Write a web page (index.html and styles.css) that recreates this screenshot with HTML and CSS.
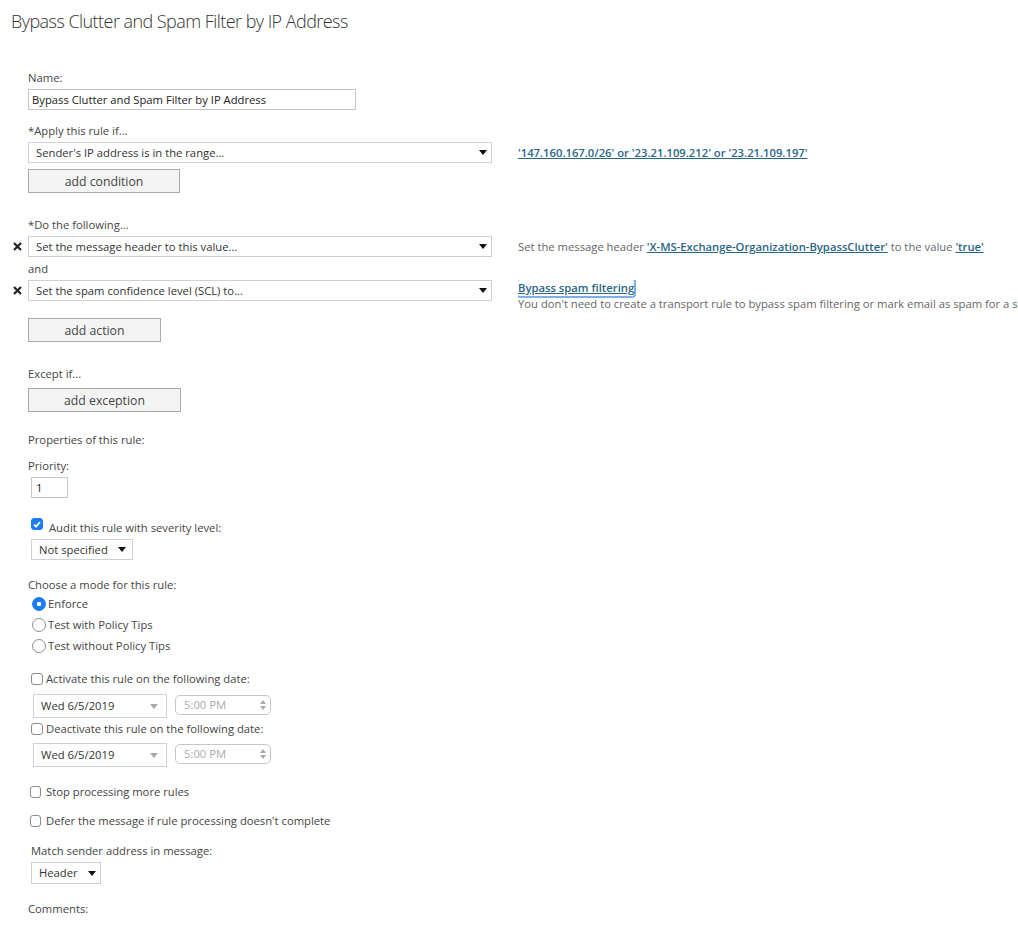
FILE: index.html
```html
<!DOCTYPE html>
<html lang="en">
<head>
    <meta charset="UTF-8">
    <meta name="viewport" content="width=device-width, initial-scale=1.0">
    <title>Bypass Clutter and Spam Filter by IP Address</title>
    <link rel="stylesheet" href="styles.css">
</head>
<body>
    <h1 class="page-title">Bypass Clutter and Spam Filter by IP Address</h1>

    <form class="rule-form">
        <label class="label">Name:</label>
        <input class="text-input name-input" type="text" value="Bypass Clutter and Spam Filter by IP Address">

        <label class="label gap-13">*Apply this rule if...</label>
        <div class="rule-row gap-3">
            <div class="gutter"></div>
            <div class="dropdown wide">
                <span>Sender's IP address is in the range...</span>
                <svg class="caret" width="8" height="5" viewBox="0 0 8 5"><path d="M0 0h8L4 5z"/></svg>
            </div>
            <div class="rule-desc">
                <a class="link" href="#">'147.160.167.0/26' or '23.21.109.212' or '23.21.109.197'</a>
            </div>
        </div>
        <button type="button" class="btn btn-condition gap-6">add condition</button>

        <label class="label gap-24">*Do the following...</label>
        <div class="rule-row gap-3">
            <div class="gutter">
                <svg class="remove" width="9" height="9" viewBox="0 0 9 9"><path d="M1 1l7 7M8 1L1 8"/></svg>
            </div>
            <div class="dropdown wide">
                <span>Set the message header to this value...</span>
                <svg class="caret" width="8" height="5" viewBox="0 0 8 5"><path d="M0 0h8L4 5z"/></svg>
            </div>
            <div class="rule-desc">
                Set the message header <a class="link" href="#">'X-MS-Exchange-Organization-BypassClutter'</a> to the value <a class="link" href="#">'true'</a>
            </div>
        </div>
        <div class="label gap-4">and</div>
        <div class="rule-row gap-3">
            <div class="gutter">
                <svg class="remove" width="9" height="9" viewBox="0 0 9 9"><path d="M1 1l7 7M8 1L1 8"/></svg>
            </div>
            <div class="dropdown wide">
                <span>Set the spam confidence level (SCL) to...</span>
                <svg class="caret" width="8" height="5" viewBox="0 0 8 5"><path d="M0 0h8L4 5z"/></svg>
            </div>
            <div class="rule-desc tight">
                <a class="link focused" href="#">Bypass spam filtering</a><br>
                You don't need to create a transport rule to bypass spam filtering or mark email as spam for a specific sender or domain.
            </div>
        </div>
        <button type="button" class="btn btn-action gap-6">add action</button>

        <label class="label gap-24">Except if...</label>
        <button type="button" class="btn btn-exception gap-6">add exception</button>

        <div class="label gap-20">Properties of this rule:</div>
        <label class="label gap-10">Priority:</label>
        <input class="text-input priority-input" type="text" value="1">

        <div class="check-row audit-row">
            <span class="checkbox checked">
                <svg width="8" height="7" viewBox="0 0 8 7"><path d="M1 3.6l2 2L7 1"/></svg>
            </span>
            <span>Audit this rule with severity level:</span>
        </div>
        <div class="dropdown severity gap-4">
            <span>Not specified</span>
            <svg class="caret" width="8" height="5" viewBox="0 0 8 5"><path d="M0 0h8L4 5z"/></svg>
        </div>

        <div class="label gap-17">Choose a mode for this rule:</div>
        <div class="radio-group">
            <div class="radio-row"><span class="radio checked"></span>Enforce</div>
            <div class="radio-row"><span class="radio"></span>Test with Policy Tips</div>
            <div class="radio-row"><span class="radio"></span>Test without Policy Tips</div>
        </div>

        <div class="check-row date-check gap-15">
            <span class="checkbox"></span>
            <span>Activate this rule on the following date:</span>
        </div>
        <div class="date-row gap-7">
            <div class="date-select">
                <span>Wed 6/5/2019</span>
                <svg class="caret light" width="8" height="5" viewBox="0 0 8 5"><path d="M0 0h8L4 5z"/></svg>
            </div>
            <div class="time-field">
                <span>5:00 PM</span>
                <svg class="spin" width="6" height="10" viewBox="0 0 6 10"><path d="M0 4h6L3 0zM0 6h6L3 10z"/></svg>
            </div>
        </div>
        <div class="check-row date-check gap-3">
            <span class="checkbox"></span>
            <span>Deactivate this rule on the following date:</span>
        </div>
        <div class="date-row gap-6">
            <div class="date-select">
                <span>Wed 6/5/2019</span>
                <svg class="caret light" width="8" height="5" viewBox="0 0 8 5"><path d="M0 0h8L4 5z"/></svg>
            </div>
            <div class="time-field">
                <span>5:00 PM</span>
                <svg class="spin" width="6" height="10" viewBox="0 0 6 10"><path d="M0 4h6L3 0zM0 6h6L3 10z"/></svg>
            </div>
        </div>

        <div class="check-row option-check gap-17">
            <span class="checkbox"></span>
            <span>Stop processing more rules</span>
        </div>
        <div class="check-row option-check gap-13">
            <span class="checkbox"></span>
            <span>Defer the message if rule processing doesn't complete</span>
        </div>

        <div class="label indent gap-14">Match sender address in message:</div>
        <div class="dropdown header-select gap-3">
            <span>Header</span>
            <svg class="caret" width="8" height="5" viewBox="0 0 8 5"><path d="M0 0h8L4 5z"/></svg>
        </div>

        <label class="label gap-17">Comments:</label>
    </form>
</body>
</html>
```

FILE: styles.css
```css
html, body {
    overflow: hidden;
}
body {
    margin: 0;
    padding: 0;
    font-family: "Segoe UI", "Open Sans", sans-serif;
    font-size: 11.25px;
    line-height: 16px;
    color: #444;
    background-color: white;
}
.page-title {
    margin: 0;
    padding: 8px 11px 0;
    font-family: "Segoe UI", "Open Sans", sans-serif;
    font-size: 18px;
    letter-spacing: -0.55px;
    line-height: 26px;
    font-weight: 300;
    color: #333;
}
.rule-form {
    margin-top: 36px;
    padding-left: 28px;
}
.label {
    display: block;
    height: 16px;
}
.indent {
    margin-left: 3px;
}
.gap-3 { margin-top: 3px; }
.gap-4 { margin-top: 4px; }
.gap-6 { margin-top: 6px; }
.gap-7 { margin-top: 7px; }
.gap-10 { margin-top: 10px; }
.gap-13 { margin-top: 13px; }
.gap-14 { margin-top: 14px; }
.gap-15 { margin-top: 15px; }
.gap-17 { margin-top: 17px; }
.gap-20 { margin-top: 20px; }
.gap-24 { margin-top: 24px; }

.text-input {
    display: block;
    box-sizing: border-box;
    margin: 3px 0 0;
    height: 21px;
    padding: 0 3px;
    border: 1px solid #c6c6c6;
    font-family: inherit;
    font-size: 11.25px;
    color: #222;
    outline: none;
}
.name-input {
    width: 328px;
}
.priority-input {
    width: 37px;
    margin-left: 3px;
    padding-left: 4px;
}

.rule-row {
    display: flex;
    align-items: flex-start;
    margin-left: -20px;
}
.gutter {
    width: 20px;
    height: 21px;
    display: flex;
    align-items: center;
    flex-shrink: 0;
}
.remove {
    margin-left: 5px;
    stroke: #222;
    stroke-width: 2.2;
}
.dropdown {
    box-sizing: border-box;
    height: 21px;
    display: flex;
    align-items: center;
    justify-content: space-between;
    padding: 0 4px 0 7px;
    border: 1px solid #d0d0d0;
    background-color: white;
    color: #333;
    flex-shrink: 0;
}
.dropdown.wide {
    width: 464px;
}
.caret {
    fill: #111;
    flex-shrink: 0;
}
.caret.light {
    fill: #aaa;
}
.rule-desc {
    min-width: 0;
    margin-left: 26px;
    padding: 3px 2px 0 0;
    white-space: nowrap;
    overflow: hidden;
    color: #666;
}
.rule-desc.tight {
    padding-top: 0;
}
.link {
    color: #2a6584;
    font-weight: 600;
    text-decoration: underline;
}
.focused {
    display: inline-block;
    border-radius: 2px;
    box-shadow: 0 0 0 2px rgba(80, 150, 230, 0.75);
}

.btn {
    display: block;
    box-sizing: border-box;
    height: 24px;
    padding: 0;
    border: 1px solid #a9a9a9;
    background-color: #f4f4f4;
    font-family: inherit;
    font-size: 12.25px;
    color: #444;
    cursor: pointer;
}
.btn-condition {
    width: 152px;
}
.btn-action {
    width: 133px;
}
.btn-exception {
    width: 153px;
}

.check-row {
    display: flex;
    align-items: center;
    height: 16px;
}
.checkbox {
    box-sizing: border-box;
    width: 12px;
    height: 12px;
    border: 1px solid #8c8c8c;
    border-radius: 3px;
    background-color: white;
    display: flex;
    align-items: center;
    justify-content: center;
    flex-shrink: 0;
}
.checkbox.checked {
    background-color: #1a7cf0;
    border-color: #1a7cf0;
}
.checkbox svg {
    fill: none;
    stroke: white;
    stroke-width: 1.8;
}
.audit-row {
    margin-top: 21px;
    margin-left: 3px;
    align-items: flex-start;
}
.audit-row .checkbox {
    margin: -1px 6px 0 0;
}
.audit-row span:last-child {
    margin-top: 1px;
}
.severity {
    width: 102px;
    margin-left: 3px;
    padding-right: 6px;
}
.date-check {
    margin-left: 3px;
}
.date-check .checkbox {
    margin-right: 3px;
}
.option-check {
    margin-left: 2px;
}
.option-check .checkbox {
    width: 11px;
    margin-right: 5px;
}

.radio-group {
    margin-left: 4px;
}
.radio-row {
    display: flex;
    align-items: center;
    height: 21px;
}
.radio {
    box-sizing: border-box;
    width: 14px;
    height: 14px;
    border: 1px solid #8c8c8c;
    border-radius: 50%;
    margin-right: 2px;
    background-color: white;
}
.radio.checked {
    border-color: #1a7cf0;
    background: radial-gradient(circle, white 0 2px, #1a7cf0 2.5px);
}

.date-row {
    display: flex;
    align-items: flex-start;
    margin-left: 5px;
}
.date-select {
    box-sizing: border-box;
    width: 134px;
    height: 24px;
    display: flex;
    align-items: center;
    justify-content: space-between;
    padding: 0 8px 0 7px;
    border: 1px solid #d0d0d0;
    color: #333;
}
.time-field {
    box-sizing: border-box;
    width: 96px;
    height: 20px;
    margin: 1px 0 0 8px;
    display: flex;
    align-items: center;
    justify-content: space-between;
    padding: 0 4px 0 8px;
    border: 1px solid #c6c6c6;
    border-radius: 5px;
    color: #aaa;
}
.spin {
    fill: #aaa;
}
.header-select {
    width: 70px;
    height: 22px;
    margin-left: 3px;
    padding-right: 4px;
}
```
